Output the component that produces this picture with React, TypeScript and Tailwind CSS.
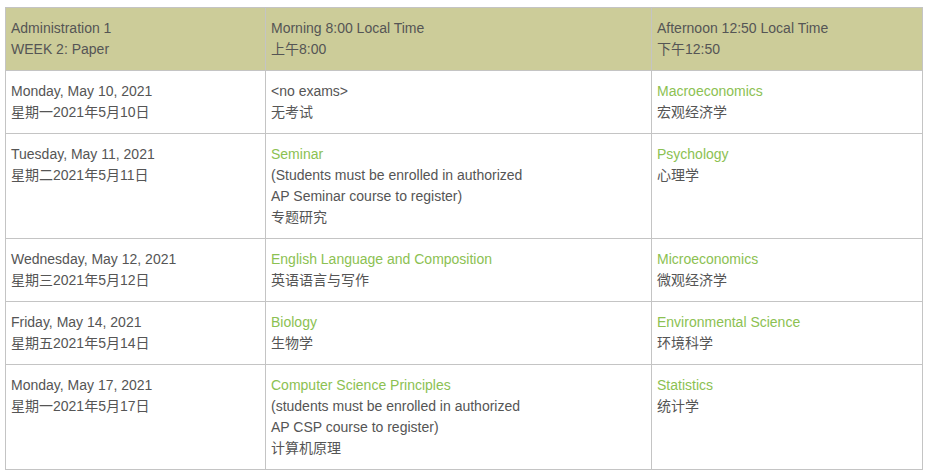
type Line = { text: string; green?: boolean };

type Row = {
  date: string[];
  morning: Line[];
  afternoon: Line[];
};

const rows: Row[] = [
  {
    date: ["Monday, May 10, 2021", "星期一2021年5月10日"],
    morning: [{ text: "<no exams>" }, { text: "无考试" }],
    afternoon: [{ text: "Macroeconomics", green: true }, { text: "宏观经济学" }],
  },
  {
    date: ["Tuesday, May 11, 2021", "星期二2021年5月11日"],
    morning: [
      { text: "Seminar", green: true },
      { text: "(Students must be enrolled in authorized" },
      { text: "AP Seminar course to register)" },
      { text: "专题研究" },
    ],
    afternoon: [{ text: "Psychology", green: true }, { text: "心理学" }],
  },
  {
    date: ["Wednesday, May 12, 2021", "星期三2021年5月12日"],
    morning: [{ text: "English Language and Composition", green: true }, { text: "英语语言与写作" }],
    afternoon: [{ text: "Microeconomics", green: true }, { text: "微观经济学" }],
  },
  {
    date: ["Friday, May 14, 2021", "星期五2021年5月14日"],
    morning: [{ text: "Biology", green: true }, { text: "生物学" }],
    afternoon: [{ text: "Environmental Science", green: true }, { text: "环境科学" }],
  },
  {
    date: ["Monday, May 17, 2021", "星期一2021年5月17日"],
    morning: [
      { text: "Computer Science Principles", green: true },
      { text: "(students must be enrolled in authorized" },
      { text: "AP CSP course to register)" },
      { text: "计算机原理" },
    ],
    afternoon: [{ text: "Statistics", green: true }, { text: "统计学" }],
  },
];

function Lines({ lines }: { lines: Line[] }) {
  return (
    <>
      {lines.map((l, i) => (
        <div key={i} className={l.green ? "text-[#8cc152]" : ""}>
          {l.text}
        </div>
      ))}
    </>
  );
}

const cell = "border border-[#c4c4c4] px-[5px] py-[10px] align-top text-left font-normal";

export default function App() {
  return (
    <div className="bg-white pt-[7px] pl-[5px] font-['Liberation_Sans','Noto_Sans_CJK_SC',sans-serif] text-[14px] leading-[21px] text-[#555]">
      <table className="w-[917px] table-fixed border-collapse">
        <colgroup>
          <col className="w-[260px]" />
          <col className="w-[386px]" />
          <col className="w-[271px]" />
        </colgroup>
        <thead>
          <tr className="bg-[#cccc99]">
            <th className={cell}>
              <div>Administration 1</div>
              <div>WEEK 2: Paper</div>
            </th>
            <th className={cell}>
              <div>Morning 8:00 Local Time</div>
              <div>上午8:00</div>
            </th>
            <th className={cell}>
              <div>Afternoon 12:50 Local Time</div>
              <div>下午12:50</div>
            </th>
          </tr>
        </thead>
        <tbody>
          {rows.map((r) => (
            <tr key={r.date[0]}>
              <td className={cell}>
                {r.date.map((d) => (
                  <div key={d}>{d}</div>
                ))}
              </td>
              <td className={cell}>
                <Lines lines={r.morning} />
              </td>
              <td className={cell}>
                <Lines lines={r.afternoon} />
              </td>
            </tr>
          ))}
        </tbody>
      </table>
    </div>
  );
}
